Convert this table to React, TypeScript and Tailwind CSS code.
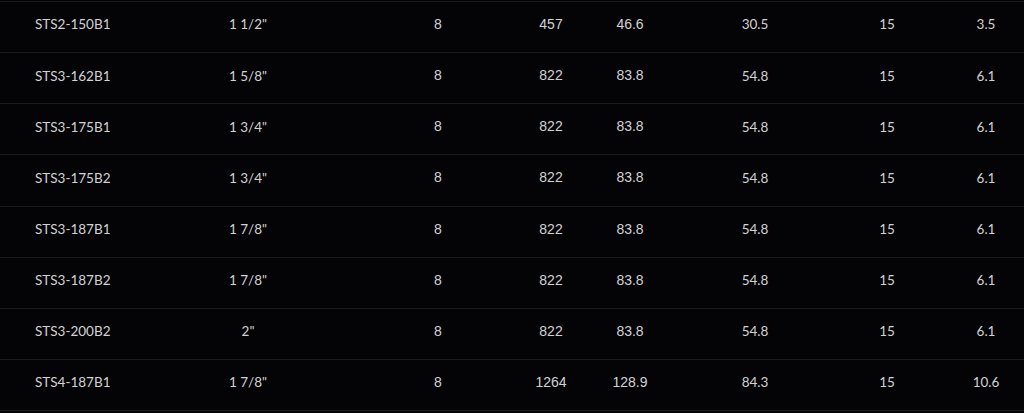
import React from 'react';

const rows = [
  ['STS2-150B1', '1 1/2"', '8', '457', '46.6', '30.5', '15', '3.5'],
  ['STS3-162B1', '1 5/8"', '8', '822', '83.8', '54.8', '15', '6.1'],
  ['STS3-175B1', '1 3/4"', '8', '822', '83.8', '54.8', '15', '6.1'],
  ['STS3-175B2', '1 3/4"', '8', '822', '83.8', '54.8', '15', '6.1'],
  ['STS3-187B1', '1 7/8"', '8', '822', '83.8', '54.8', '15', '6.1'],
  ['STS3-187B2', '1 7/8"', '8', '822', '83.8', '54.8', '15', '6.1'],
  ['STS3-200B2', '2"', '8', '822', '83.8', '54.8', '15', '6.1'],
  ['STS4-187B1', '1 7/8"', '8', '1264', '128.9', '84.3', '15', '10.6'],
];

const geo = "font-['Lato','Open_Sans',sans-serif] text-[13.5px]";
const plain = "font-['Liberation_Sans','Arial',sans-serif] text-[14px]";

export default function App() {
  return (
    <div className="w-[1024px] h-[413px] bg-[#040406] overflow-hidden pt-px text-[#d2d2d4]">
      <div className="w-[1039px] border-t border-[#1b1b1d]">
        {rows.map((r) => (
          <div
            key={r[0]}
            className="grid grid-cols-[131px_234px_146px_80px_78px_172px_92px_106px] items-center h-[51.125px] border-b border-[#1b1b1d] pb-[5px]"
          >
            <span className={`pl-[35px] whitespace-nowrap ${geo}`}>{r[0]}</span>
            <span className={`text-center ${geo}`}>{r[1]}</span>
            <span className={`text-center ${plain}`}>{r[2]}</span>
            <span className={`text-center ${plain}`}>{r[3]}</span>
            <span className={`text-center ${plain}`}>{r[4]}</span>
            <span className={`text-center ${geo}`}>{r[5]}</span>
            <span className={`text-center ${geo}`}>{r[6]}</span>
            <span className={`text-center ${geo}`}>{r[7]}</span>
          </div>
        ))}
      </div>
    </div>
  );
}
